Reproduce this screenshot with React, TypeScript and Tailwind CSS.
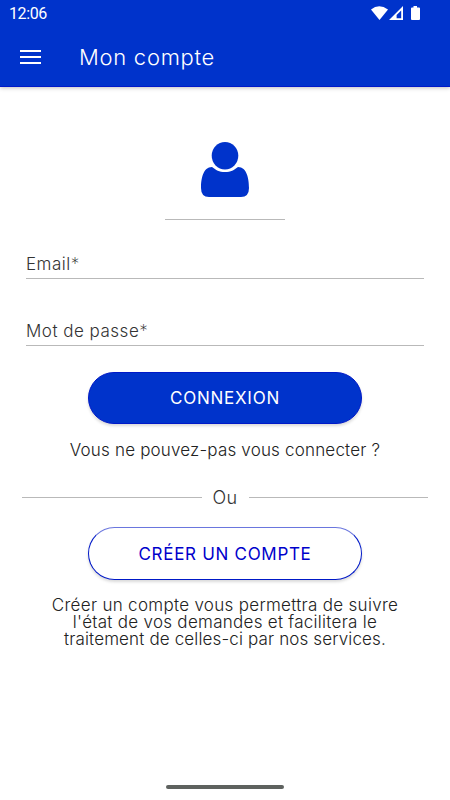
import React from 'react';

function StatusBar() {
  return (
    <div className="flex h-7 items-center justify-between pl-[9px] pr-[30px]">
      <span className="font-[Roboto,sans-serif] text-[16px] font-normal leading-none tracking-[-0.4px]">12:06</span>
      <svg className="mb-[2px] h-[14px] w-[49px]" viewBox="0 0 49 14" fill="currentColor" aria-hidden="true">
        <path d="M0 3.500Q8-3 17 3.500L8.500 14Z" />
        <path fillRule="evenodd" d="M32 0V14H18ZM30.200 4.500L25.600 9V12.200H30.200Z" />
        <path d="M42.500 0h3.500v1.500H48q1 0 1 1V13q0 1-1 1h-7q-1 0-1-1V2.500q0-1 1-1h1.500Z" />
      </svg>
    </div>
  );
}

function Field({ label }: { label: string }) {
  return (
    <div className="flex h-[33px] items-center border-b border-[#b9b9b9] pt-1.5 text-[17px] tracking-[0.5px] text-[#333]">
      <span className="whitespace-pre">{label}<span className="font-extralight">*</span></span>
    </div>
  );
}

export default function App() {
  return (
    <div className="flex h-[800px] w-[450px] flex-col overflow-hidden bg-white font-[Inter,sans-serif] font-light text-[#333]">
      <header className="h-[87px] shrink-0 border-b border-[#0019c8] bg-[#0033cb] text-white shadow-[0_1px_4px_rgba(0,0,0,0.25)]">
        <StatusBar />
        <div className="flex h-[58px] items-center pl-5">
          <button aria-label="Menu" className="flex w-[21px] flex-col gap-1">
            <span className="h-0.5 bg-white" />
            <span className="h-0.5 bg-white" />
            <span className="h-0.5 bg-white" />
          </button>
          <h1 className="ml-[38px] text-[22px] leading-none tracking-[0.72px]">Mon compte</h1>
        </div>
      </header>

      <main className="flex flex-col px-[26px]">
        <div className="mx-auto flex h-[133px] w-[120px] justify-center border-b border-[#b9b9b9] pt-[55px]">
          <svg className="h-[55px] w-12" viewBox="0 0 48 55" fill="#0033cb" aria-hidden="true">
            <ellipse cx="24" cy="13.700" rx="13.300" ry="13.700" />
            <path d="M11 25C15 28 18 30 24 30S33 28 37 25C46 25 48 37 48 46Q48 55 40 55H8Q0 55 0 46C0 37 2 25 11 25Z" />
          </svg>
        </div>

        <div className="mt-[26px]"><Field label="Email" /></div>
        <div className="mt-[34px]"><Field label="Mot de passe" /></div>

        <button className="mx-auto mt-[26px] h-[52px] w-[274px] rounded-full border border-[#0019c8] bg-[#0033cb] pt-0.5 text-[17px] font-normal tracking-[0.75px] text-white shadow-[0_2px_3px_rgba(0,0,0,0.15)]">CONNEXION</button>
        <p className="mt-[17px] whitespace-nowrap text-center text-[17px] leading-[18px] tracking-[0.18px] text-[#222]">Vous ne pouvez-pas vous connecter ?</p>

        <div className="-mx-1 mt-[28px] flex h-5 items-center">
          <span className="h-px flex-1 bg-[#b9b9b9]" />
          <span className="w-[47px] pt-0.5 text-center text-[18px] leading-5 tracking-[0.3px]">Ou</span>
          <span className="h-px flex-1 bg-[#b9b9b9]" />
        </div>

        <button className="mx-auto mt-5 h-[53px] w-[274px] rounded-full border border-[#0019c8] border-t-[#6a76de] bg-white pt-0.5 text-[17px] font-normal tracking-[0.7px] text-[#0000cb] shadow-[0_2px_3px_rgba(0,0,0,0.15)]">CRÉER UN COMPTE</button>
        <p className="mt-[17px] whitespace-nowrap text-center text-[17px] leading-[17px] text-[#222]">
          <span className="tracking-[0.3px]">Créer un compte vous permettra de suivre</span>
          <br />
          <span className="tracking-[0.28px]">l'état de vos demandes et facilitera le</span>
          <br />
          <span className="tracking-[0.14px]">traitement de celles-ci par nos services.</span>
        </p>
      </main>
      <div className="mx-auto mb-[11px] mt-auto h-1 w-[118px] rounded-full bg-[#5e625f]" />
    </div>
  );
}
